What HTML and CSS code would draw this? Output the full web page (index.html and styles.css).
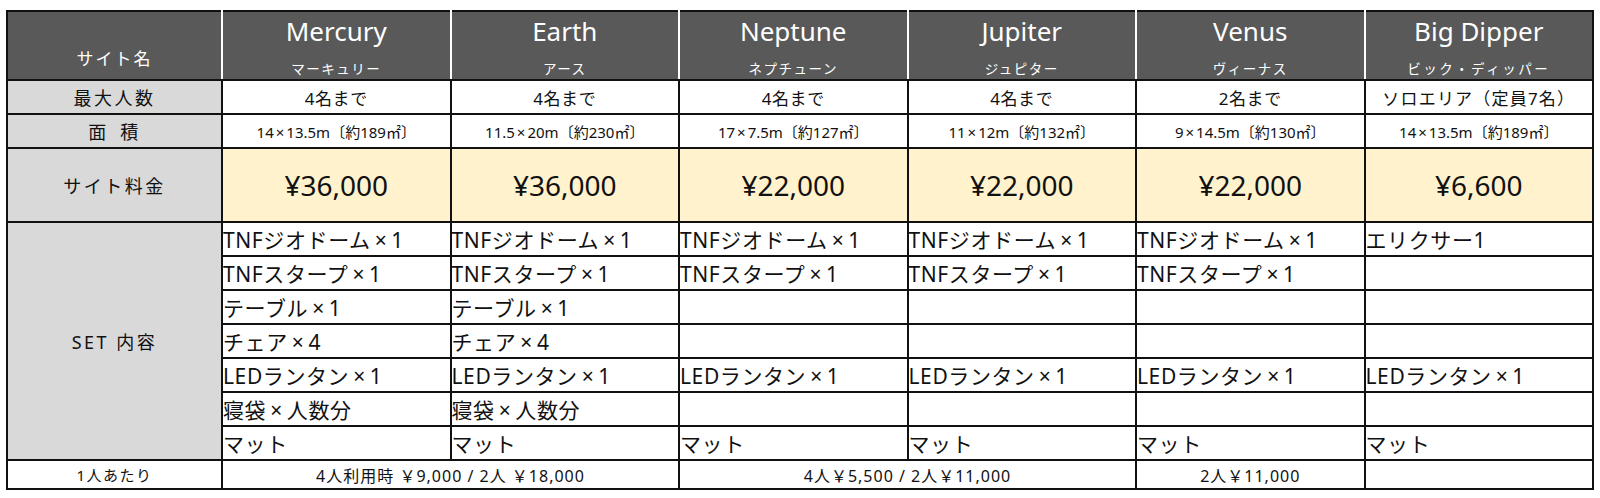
FILE: index.html
```html
<!DOCTYPE html>
<html lang="ja">
<head>
<meta charset="utf-8">
<title>サイト一覧</title>
<link rel="stylesheet" href="styles.css">
</head>
<body>
<table class="sites">
  <colgroup>
    <col class="c-label">
    <col class="c-site"><col class="c-site"><col class="c-site">
    <col class="c-site"><col class="c-site"><col class="c-site">
  </colgroup>
  <tr class="r-head">
    <th class="head-label">サイト名</th>
    <th class="head-site"><div class="en">Mercury</div><div class="ja">マーキュリー</div></th>
    <th class="head-site"><div class="en">Earth</div><div class="ja">アース</div></th>
    <th class="head-site"><div class="en">Neptune</div><div class="ja">ネプチューン</div></th>
    <th class="head-site"><div class="en">Jupiter</div><div class="ja">ジュピター</div></th>
    <th class="head-site"><div class="en">Venus</div><div class="ja">ヴィーナス</div></th>
    <th class="head-site"><div class="en">Big Dipper</div><div class="ja ja-wide">ビック・ディッパー</div></th>
  </tr>
  <tr class="r-cap">
    <th class="label">最大人数</th>
    <td class="cap">4名まで</td>
    <td class="cap">4名まで</td>
    <td class="cap">4名まで</td>
    <td class="cap">4名まで</td>
    <td class="cap">2名まで</td>
    <td class="cap cap-wide">ソロエリア（定員7名）</td>
  </tr>
  <tr class="r-area">
    <th class="label">面&ensp;積</th>
    <td class="area">14<span class="x">×</span>13.5m〔約189㎡〕</td>
    <td class="area">11.5<span class="x">×</span>20m〔約230㎡〕</td>
    <td class="area">17<span class="x">×</span>7.5m〔約127㎡〕</td>
    <td class="area">11<span class="x">×</span>12m〔約132㎡〕</td>
    <td class="area">9<span class="x">×</span>14.5m〔約130㎡〕</td>
    <td class="area">14<span class="x">×</span>13.5m〔約189㎡〕</td>
  </tr>
  <tr class="r-price">
    <th class="label">サイト料金</th>
    <td class="price">¥36,000</td>
    <td class="price">¥36,000</td>
    <td class="price">¥22,000</td>
    <td class="price">¥22,000</td>
    <td class="price">¥22,000</td>
    <td class="price">¥6,600</td>
  </tr>
  <tr class="r-set">
    <th class="label" rowspan="7">SET 内容</th>
    <td class="item">TNFジオドーム<span class="x">×</span>1</td>
    <td class="item">TNFジオドーム<span class="x">×</span>1</td>
    <td class="item">TNFジオドーム<span class="x">×</span>1</td>
    <td class="item">TNFジオドーム<span class="x">×</span>1</td>
    <td class="item">TNFジオドーム<span class="x">×</span>1</td>
    <td class="item">エリクサー1</td>
  </tr>
  <tr class="r-set">
    <td class="item">TNFスタープ<span class="x">×</span>1</td>
    <td class="item">TNFスタープ<span class="x">×</span>1</td>
    <td class="item">TNFスタープ<span class="x">×</span>1</td>
    <td class="item">TNFスタープ<span class="x">×</span>1</td>
    <td class="item">TNFスタープ<span class="x">×</span>1</td>
    <td class="item"></td>
  </tr>
  <tr class="r-set">
    <td class="item">テーブル<span class="x">×</span>1</td>
    <td class="item">テーブル<span class="x">×</span>1</td>
    <td class="item"></td>
    <td class="item"></td>
    <td class="item"></td>
    <td class="item"></td>
  </tr>
  <tr class="r-set">
    <td class="item">チェア<span class="x">×</span>4</td>
    <td class="item">チェア<span class="x">×</span>4</td>
    <td class="item"></td>
    <td class="item"></td>
    <td class="item"></td>
    <td class="item"></td>
  </tr>
  <tr class="r-set">
    <td class="item">LEDランタン<span class="x">×</span>1</td>
    <td class="item">LEDランタン<span class="x">×</span>1</td>
    <td class="item">LEDランタン<span class="x">×</span>1</td>
    <td class="item">LEDランタン<span class="x">×</span>1</td>
    <td class="item">LEDランタン<span class="x">×</span>1</td>
    <td class="item">LEDランタン<span class="x">×</span>1</td>
  </tr>
  <tr class="r-set">
    <td class="item">寝袋<span class="x">×</span>人数分</td>
    <td class="item">寝袋<span class="x">×</span>人数分</td>
    <td class="item"></td>
    <td class="item"></td>
    <td class="item"></td>
    <td class="item"></td>
  </tr>
  <tr class="r-set">
    <td class="item">マット</td>
    <td class="item">マット</td>
    <td class="item">マット</td>
    <td class="item">マット</td>
    <td class="item">マット</td>
    <td class="item">マット</td>
  </tr>
  <tr class="r-foot">
    <th class="foot-label">1人あたり</th>
    <td class="foot" colspan="2">4人利用時 ￥9,000 / 2人 ￥18,000</td>
    <td class="foot" colspan="2">4人￥5,500 / 2人￥11,000</td>
    <td class="foot">2人￥11,000</td>
    <td class="foot"></td>
  </tr>
</table>
</body>
</html>
```

FILE: styles.css
```css
html, body {
  margin: 0;
  padding: 0;
  background: #ffffff;
}

body {
  font-family: "Noto Sans", "Noto Sans CJK JP", sans-serif;
  color: #111111;
}

.sites {
  margin: 10px 0 0 6px;
  border-collapse: collapse;
  table-layout: fixed;
  width: 1586px;
}

.c-label { width: 215px; }
.c-site { width: 228.5px; }

.sites th,
.sites td {
  border: 2px solid #111111;
  padding: 0;
  font-weight: 400;
  white-space: nowrap;
  overflow: hidden;
}

/* header row */
.r-head { height: 69px; }

.sites .r-head th {
  background: #595959;
  color: #ffffff;
  border-left-color: #ffffff;
  border-right-color: #ffffff;
}

.sites .r-head th:first-child { border-left-color: #111111; }
.sites .r-head th:last-child { border-right-color: #111111; }

.sites .head-label {
  vertical-align: bottom;
  padding-bottom: 9px;
  font-size: 17px;
  line-height: 22px;
  letter-spacing: 2px;
}

.sites .head-site {
  vertical-align: top;
  padding-top: 4px;
}

.en {
  font-size: 26px;
  line-height: 30px;
}

.ja {
  margin-top: 14px;
  font-size: 13.5px;
  line-height: 18px;
  letter-spacing: 1.5px;
}

.ja-wide {
  letter-spacing: 2.5px;
}

/* label column */
.sites .label {
  background: #d9d9d9;
  font-size: 18px;
  letter-spacing: 2.5px;
  text-align: center;
}

.r-cap { height: 34px; }
.r-area { height: 34px; }
.r-price { height: 74px; }
.r-set { height: 34px; }
.r-foot { height: 29px; }

.cap {
  text-align: center;
  font-size: 17px;
  letter-spacing: 0.6px;
}

.cap-wide {
  letter-spacing: 1.2px;
}

.area {
  text-align: center;
  font-size: 15px;
}

.area .x {
  padding: 0 2px;
}

.price {
  background: #fff2cc;
  text-align: center;
  font-size: 28px;
}

.sites .item {
  text-align: left;
  padding-left: 0;
  font-size: 21px;
  letter-spacing: 0.6px;
}

.item .x {
  padding: 0 4px;
}

.sites .foot-label {
  text-align: center;
  font-size: 15px;
  letter-spacing: 1.5px;
}

.foot {
  text-align: center;
  font-size: 16px;
  letter-spacing: 1px;
}
```
